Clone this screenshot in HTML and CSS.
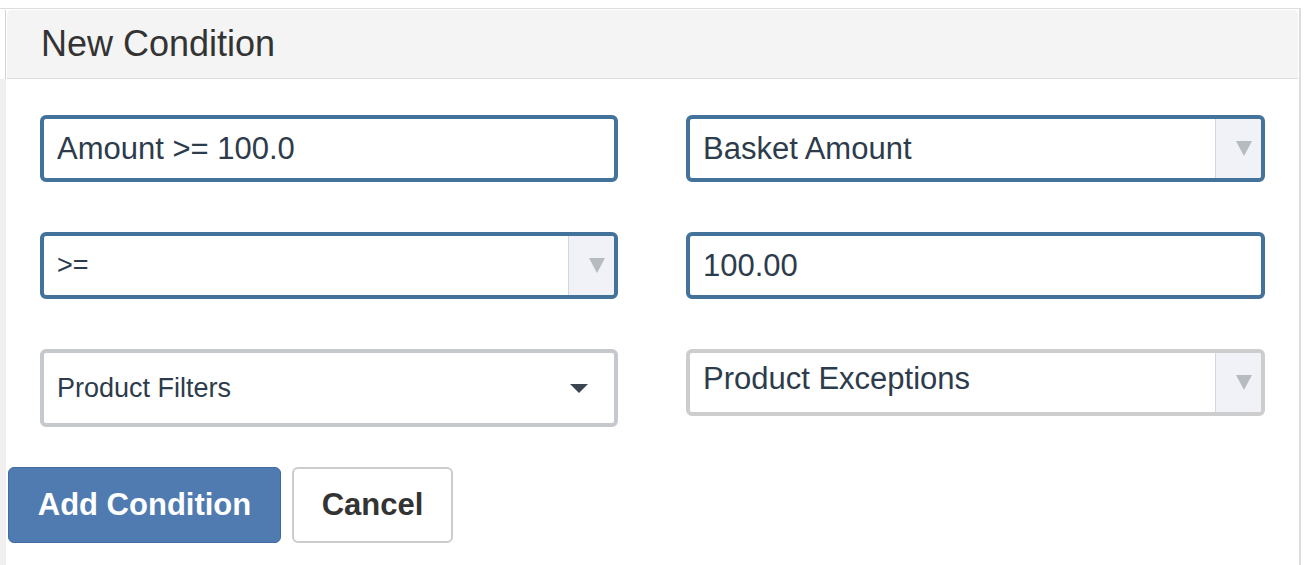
FILE: index.html
```html
<!DOCTYPE html>
<html>
<head>
    <title>New Condition</title>
    <link rel="stylesheet" href="styles.css">
</head>
<body>
    <div class="frame">
        <div class="panel-top">
            <div class="panel-heading">New Condition</div>
        </div>

        <div class="panel-body">
            <div class="form-grid">
                <input class="field active" type="text" value="Amount &gt;= 100.0">

                <div class="field active select">
                    <div class="select-value">Basket Amount</div>
                    <div class="select-arrow"></div>
                </div>

                <div class="field active select">
                    <div class="select-value small">&gt;=</div>
                    <div class="select-arrow"></div>
                </div>

                <input class="field active" type="text" value="100.00">

                <div class="field dropdown">
                    <div class="select-value small">Product Filters</div>
                    <div class="caret"></div>
                </div>

                <div class="field select muted">
                    <div class="select-value raised">Product Exceptions</div>
                    <div class="select-arrow"></div>
                </div>
            </div>

            <div class="actions">
                <button class="btn btn-primary">Add Condition</button>
                <button class="btn btn-default">Cancel</button>
            </div>
        </div>
    </div>
</body>
</html>
```

FILE: styles.css
```css
* {
    box-sizing: border-box;
}

body {
    margin: 0;
    font-family: "Liberation Sans", Arial, sans-serif;
    color: #333;
    background: #fff;
}

.frame {
    margin-top: 8px;
    width: 1301px;
    padding-top: 1px;
    border-top: 1px solid #ddd;
    border-right: 2px solid #ddd;
}

.panel-top {
    margin: 0 1px 0 5px;
    padding-left: 1px;
    border-left: 1px solid #d2d2d2;
}

.panel-heading {
    height: 69px;
    padding-left: 34px;
    font-size: 36px;
    line-height: 68px;
    background: #f4f4f4;
    border-bottom: 1px solid #ddd;
    border-radius: 5px 5px 0 0;
}

.panel-body {
    min-height: 486px;
    padding: 36px 0 0 2px;
    border-left: 6px solid #f0f0f0;
}

.form-grid {
    display: grid;
    grid-template-columns: 578px 579px;
    column-gap: 68px;
    row-gap: 50px;
    margin-left: 32px;
    align-items: start;
}

.field {
    display: flex;
    align-items: stretch;
    width: 100%;
    height: 67px;
    margin: 0;
    padding: 0;
    font-family: "Liberation Sans", Arial, sans-serif;
    font-size: 31px;
    color: #2d3c4c;
    background: #fff;
    border: 4px solid #c5c8cc;
    border-radius: 6px;
    outline: none;
}

input.field {
    padding-left: 13px;
}

.field.active {
    border-color: #43729a;
}

.field.muted {
    border-color: #cdcdcd;
}

.select-value {
    flex: 1;
    display: flex;
    align-items: center;
    padding-left: 13px;
}

.select-value.small {
    font-size: 27px;
}

.select-value.raised {
    padding-bottom: 7px;
}

.select-arrow {
    width: 46px;
    display: flex;
    align-items: center;
    justify-content: center;
    background: #f1f2f7;
    border-left: 1px solid #d4d7e0;
    border-radius: 0 3px 3px 0;
}

.select-arrow::after {
    content: "";
    margin-left: 10px;
    border-left: 8px solid transparent;
    border-right: 8px solid transparent;
    border-top: 15px solid #b6bbc0;
}

.dropdown {
    height: 78px;
}

.caret {
    width: 60px;
    display: flex;
    align-items: center;
    justify-content: center;
    padding-right: 10px;
}

.caret::after {
    content: "";
    border-left: 9px solid transparent;
    border-right: 9px solid transparent;
    border-top: 9px solid #3b4552;
}

.actions {
    display: flex;
    gap: 11px;
    margin-top: 40px;
}

.btn {
    height: 76px;
    padding: 0 27px;
    font-family: "Liberation Sans", Arial, sans-serif;
    font-size: 31px;
    font-weight: bold;
    border-radius: 6px;
    cursor: pointer;
}

.btn-primary {
    width: 273px;
    color: #fff;
    background: #507bb1;
    border: 1px solid #3f6ba1;
}

.btn-default {
    width: 161px;
    color: #333;
    background: #fff;
    border: 2px solid #ccc;
}
```
